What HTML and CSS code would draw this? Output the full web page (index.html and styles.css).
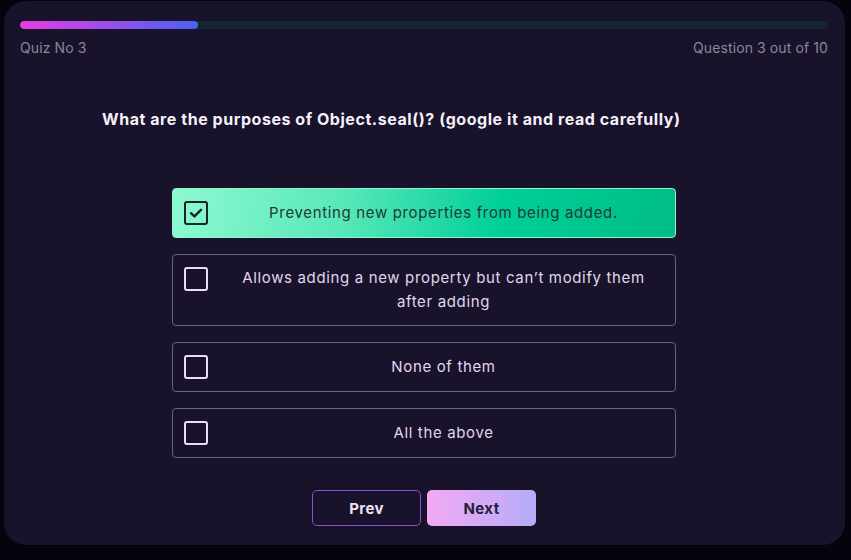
FILE: index.html
```html
<!DOCTYPE html>
<html>
<head>
<meta charset="utf-8">
<link rel="stylesheet" href="styles.css">
</head>
<body>
<div class="card">
  <div class="progress"><div class="progress-fill" style="width:22%"></div></div>
  <div class="meta">
    <span>Quiz No 3</span>
    <span>Question 3 out of 10</span>
  </div>
  <h1 class="question">What are the purposes of Object.seal()? (google it and read carefully)</h1>
  <div class="options">
    <div class="option selected">
      <span class="box"><svg width="16" height="16" viewBox="0 0 16 16"><path d="M3 8.2 L6.4 11.4 L13 4.8" fill="none" stroke="#142523" stroke-width="2.4" stroke-linecap="round" stroke-linejoin="round"/></svg></span>
      <span class="label">Preventing new properties from being added.</span>
    </div>
    <div class="option tall">
      <span class="box"></span>
      <span class="label">Allows adding a new property but can’t modify them after adding</span>
    </div>
    <div class="option">
      <span class="box"></span>
      <span class="label">None of them</span>
    </div>
    <div class="option">
      <span class="box"></span>
      <span class="label">All the above</span>
    </div>
  </div>
  <div class="actions">
    <button class="btn prev">Prev</button>
    <button class="btn next">Next</button>
  </div>
</div>
</body>
</html>
```
FILE: styles.css
```css
html, body {
  margin: 0;
  padding: 0;
  background: #04040f;
}
body {
  width: 851px;
  height: 560px;
  overflow: hidden;
  font-family: "Inter", "Liberation Sans", sans-serif;
}
.card {
  box-sizing: border-box;
  margin: 1px 0 0 4px;
  width: 841px;
  height: 544px;
  background: #18122b;
  border-radius: 22px;
  padding: 20px 17px 0 16px;
}
.progress {
  height: 8px;
  border-radius: 4px;
  background: #15262f;
  overflow: hidden;
}
.progress-fill {
  height: 100%;
  border-radius: 4px;
  background: linear-gradient(90deg, #e63de2, #4a62f2);
}
.meta {
  display: flex;
  justify-content: space-between;
  margin-top: 10px;
  font-size: 14px;
  color: #8c8696;
  letter-spacing: 0.1px;
}
.question {
  margin: 53px 0 0 82px;
  font-size: 16px;
  font-weight: 700;
  color: #f4f0f8;
  letter-spacing: 0.55px;
  line-height: 20px;
}
.options {
  width: 504px;
  margin: 59px auto 0;
  display: flex;
  flex-direction: column;
  gap: 16px;
}
.option {
  box-sizing: border-box;
  min-height: 50px;
  border: 1px solid #6b6279;
  border-radius: 4px;
  display: flex;
  align-items: center;
  padding: 0 0 0 11px;
  color: #e2d6ee;
  font-size: 15px;
  line-height: 24px;
  letter-spacing: 0.65px;
}
.option.tall {
  min-height: 72px;
  align-items: flex-start;
  padding-top: 11px;
}
.option.tall .box { margin-top: 1px; }
.option.selected {
  border-color: #8ff5cf;
  background: linear-gradient(100deg, #8ef9d1 0%, #56e7b8 35%, #00cf99 65%, #00bd84 100%);
  color: #1f3a32;
}
.box {
  box-sizing: border-box;
  flex: none;
  width: 24px;
  height: 24px;
  border: 2px solid #eddcf6;
  border-radius: 3px;
  display: flex;
  align-items: center;
  justify-content: center;
}
.selected .box {
  border-color: #142523;
}
.label {
  flex: 1;
  text-align: center;
  padding: 0 20px 0 24px;
}
.actions {
  display: flex;
  justify-content: center;
  gap: 6px;
  margin-top: 32px;
}
.btn {
  box-sizing: border-box;
  width: 109px;
  height: 36px;
  border-radius: 5px;
  font-family: "Inter", "Liberation Sans", sans-serif;
  font-size: 15px;
  font-weight: 700;
  letter-spacing: 0.4px;
  cursor: pointer;
}
.prev {
  background: transparent;
  border: 1px solid #8b4fd9;
  color: #ebe1f3;
}
.next {
  border: none;
  background: linear-gradient(90deg, #f3a9f3, #b5acf8);
  color: #271f35;
}
```
